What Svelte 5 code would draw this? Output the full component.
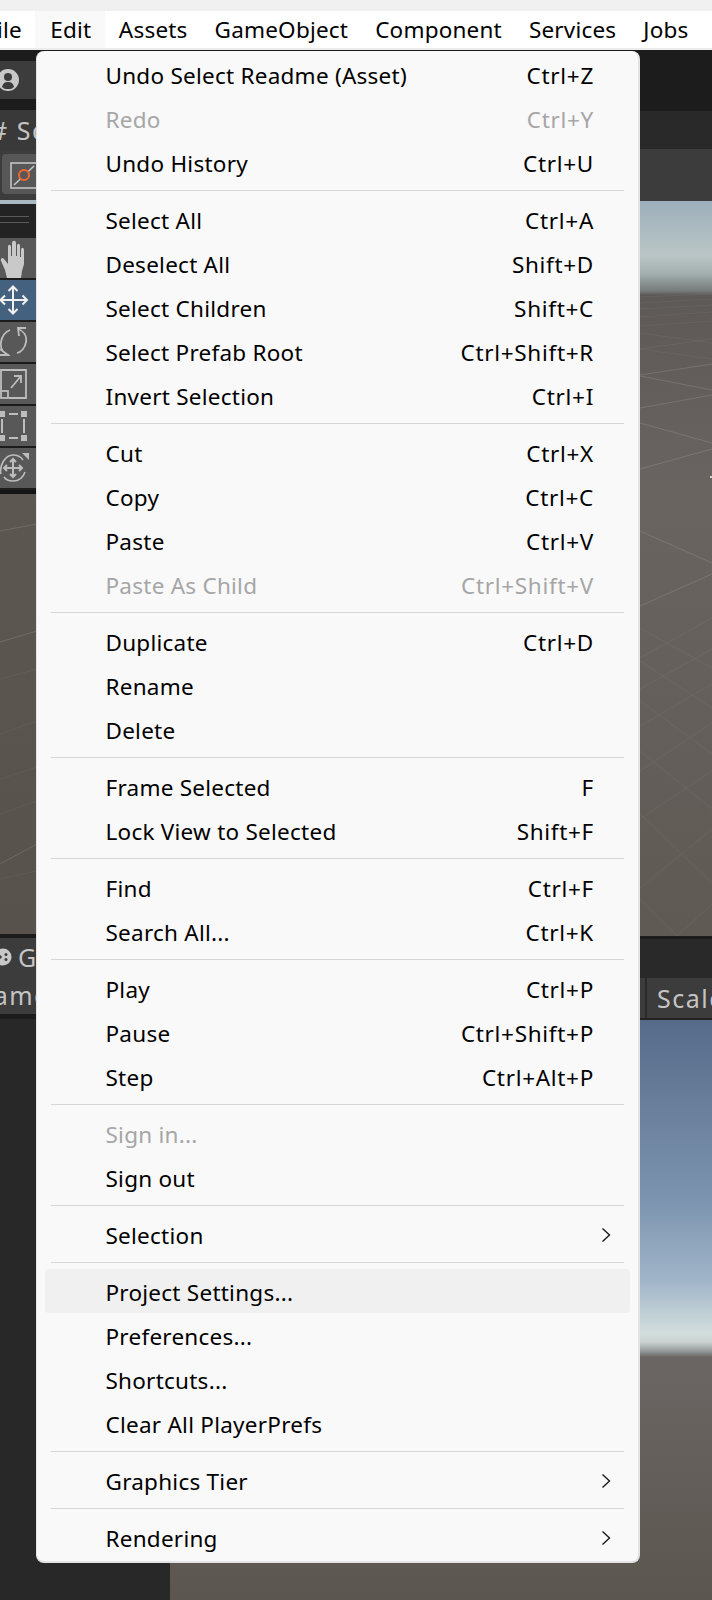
<script>
  const menubar = ['File', 'Edit', 'Assets', 'GameObject', 'Component', 'Services', 'Jobs']

  const groups = [
    [
      { label: 'Undo Select Readme (Asset)', key: 'Ctrl+Z' },
      { label: 'Redo', key: 'Ctrl+Y', disabled: true },
      { label: 'Undo History', key: 'Ctrl+U' }
    ],
    [
      { label: 'Select All', key: 'Ctrl+A' },
      { label: 'Deselect All', key: 'Shift+D' },
      { label: 'Select Children', key: 'Shift+C' },
      { label: 'Select Prefab Root', key: 'Ctrl+Shift+R' },
      { label: 'Invert Selection', key: 'Ctrl+I' }
    ],
    [
      { label: 'Cut', key: 'Ctrl+X' },
      { label: 'Copy', key: 'Ctrl+C' },
      { label: 'Paste', key: 'Ctrl+V' },
      { label: 'Paste As Child', key: 'Ctrl+Shift+V', disabled: true }
    ],
    [
      { label: 'Duplicate', key: 'Ctrl+D' },
      { label: 'Rename' },
      { label: 'Delete' }
    ],
    [
      { label: 'Frame Selected', key: 'F' },
      { label: 'Lock View to Selected', key: 'Shift+F' }
    ],
    [
      { label: 'Find', key: 'Ctrl+F' },
      { label: 'Search All...', key: 'Ctrl+K' }
    ],
    [
      { label: 'Play', key: 'Ctrl+P' },
      { label: 'Pause', key: 'Ctrl+Shift+P' },
      { label: 'Step', key: 'Ctrl+Alt+P' }
    ],
    [
      { label: 'Sign in...', disabled: true },
      { label: 'Sign out' }
    ],
    [{ label: 'Selection', sub: true }],
    [
      { label: 'Project Settings...', hover: true },
      { label: 'Preferences...' },
      { label: 'Shortcuts...' },
      { label: 'Clear All PlayerPrefs' }
    ],
    [{ label: 'Graphics Tier', sub: true }],
    [{ label: 'Rendering', sub: true }]
  ]

  // scene grid, in page coordinates; the last value marks a brighter line
  const leftGrid = [
    [0, 532, 37, 525, true],
    [0, 643, 37, 632, true],
    [0, 680, 37, 670],
    [0, 735, 37, 722],
    [0, 780, 37, 768],
    [0, 815, 37, 802],
    [0, 865, 37, 845, true],
    [0, 880, 37, 872]
  ]
  const rightGrid = [
    [640, 296, 712, 293],
    [640, 302, 712, 298],
    [640, 308, 712, 304],
    [640, 316, 712, 311],
    [640, 325, 712, 320],
    [640, 332, 712, 342],
    [640, 348, 712, 338],
    [640, 348, 712, 358],
    [640, 374, 712, 363, true],
    [640, 375, 712, 389, true],
    [640, 407, 712, 394, true],
    [640, 422, 712, 442, true],
    [640, 468, 712, 448, true],
    [640, 530, 712, 562, true],
    [640, 605, 712, 573, true],
    [640, 627, 712, 667],
    [640, 657, 712, 617],
    [640, 688, 712, 648],
    [640, 660, 712, 707],
    [640, 725, 712, 683],
    [640, 700, 712, 753],
    [640, 770, 712, 722],
    [640, 750, 712, 808],
    [640, 818, 712, 770],
    [640, 813, 712, 882],
    [640, 887, 712, 828],
    [640, 898, 677, 935],
    [677, 935, 712, 903]
  ]
</script>

<div class="top-strip"></div>

<nav class="menubar">
  {#each menubar as name}
    <span class="menubar-item" class:open={name === 'Edit'} class:file={name === 'File'}>{name}</span>
  {/each}
</nav>

<div class="stage">
  <div class="left">
    <div class="dark-gap"></div>
    <div class="account">
      <svg width="24" height="26" viewBox="0 0 24 26">
        <circle cx="8" cy="13" r="11" fill="#c8c8c8" />
        <circle cx="8" cy="10" r="4" fill="#3c3c3c" />
        <path d="M2 20c1-4 3-5 6-5s5 1 6 5l-3 2H5z" fill="#3c3c3c" />
      </svg>
    </div>
    <div class="dark-gap"></div>
    <div class="tab"><span class="tab-text scene-title"># Scene</span></div>
    <div class="tools-head">
      <div class="gizmo-btn">
        <svg width="34" height="30" viewBox="0 0 34 30">
          <rect x="9" y="4" width="40" height="25" fill="none" stroke="#c4c4c4" stroke-width="1.6" />
          <path d="M12 26L32 7" stroke="#c4c4c4" stroke-width="1.6" />
          <circle cx="22" cy="16" r="5" fill="#575757" stroke="#f0682f" stroke-width="2" />
        </svg>
      </div>
    </div>
    <div class="sky-line"></div>
    <div class="handle"><i></i><i></i></div>

    <div class="tool">
      <svg width="30" height="40" viewBox="0 0 30 40" fill="#c9c9c9">
        <path d="M7 40l-2-8-4-9c-1-3 2-4 3-2l4 5V9c0-3 3-3 3 0v9l1 0V5c0-3 4-3 4 0v13h1V8c0-3 3-3 3 0v11h1v-7c0-3 3-3 3 0v14l-2 7-1 7z" />
      </svg>
    </div>
    <div class="tool active">
      <svg width="30" height="40" viewBox="0 0 30 40" fill="none" stroke="#f0f0f0" stroke-width="2">
        <path d="M13 7v26M1 20h26M8.5 11L13 6.5l4.5 4.500M8.500 29l4.500 4.500 4.500-4.500M5 15.500L.5 20 5 24.500M22.500 15.500L27 20l-4.500 4.500" />
      </svg>
    </div>
    <div class="tool">
      <svg width="30" height="40" viewBox="0 0 30 40" fill="none" stroke="#bdbdbd" stroke-width="1.8">
        <path d="M18 7c6 2 9 7 8 13s-5 10-9 11M19 14l-1-8 8 0M9 33C3 31 0 26 1 20S5 10 10 8M0 27l8 6h-8" />
      </svg>
    </div>
    <div class="tool">
      <svg width="30" height="40" viewBox="0 0 30 40" fill="none" stroke="#bdbdbd" stroke-width="1.8">
        <path d="M1 27V6h25v28H9" />
        <rect x="1" y="27" width="7" height="7" />
        <path d="M11 24L21 12M14 12h7v7" />
      </svg>
    </div>
    <div class="tool">
      <svg width="30" height="40" viewBox="0 0 30 40" fill="#bdbdbd">
        <rect x="-2" y="5" width="7" height="6" />
        <rect x="21" y="5" width="6" height="6" />
        <rect x="-2" y="29" width="7" height="6" />
        <rect x="21" y="29" width="6" height="6" />
        <rect x="9" y="7" width="9" height="2" />
        <rect x="9" y="31" width="9" height="2" />
        <rect x="1" y="13" width="2" height="14" />
        <rect x="23" y="13" width="2" height="14" />
      </svg>
    </div>
    <div class="tool">
      <svg width="30" height="40" viewBox="0 0 30 40" fill="none" stroke="#bdbdbd" stroke-width="1.6">
        <path d="M1 26C-1 18 5 7 13 7c5 0 8 2 10 5M25 24c-2 6-6 9-12 9-4 0-7-1-9-4" />
        <path d="M13 11v18M4 20h18M10 14l3-3 3 3M10 26l3 3 3-3M7 17l-3 3 3 3M19 17l3 3-3 3" stroke-width="2" />
        <path d="M22 5h7v7z" fill="#bdbdbd" stroke="none" />
      </svg>
    </div>

    <div class="tool-end"></div>

    <svg class="scene-left" viewBox="0 495 170 440" preserveAspectRatio="none">
      {#each leftGrid as [x1, y1, x2, y2, major]}
        <line class:major {x1} {y1} {x2} {y2} />
      {/each}
    </svg>

    <div class="game-head">
      <div class="game-tab">
        <svg width="12" height="20" viewBox="0 0 12 20">
          <circle cx="3" cy="10" r="8.5" fill="#c8c8c8" />
          <circle cx="0" cy="10" r="1.8" fill="#3c3c3c" />
          <circle cx="6" cy="7.5" r="1.5" fill="#3c3c3c" />
          <circle cx="6" cy="12.5" r="1.5" fill="#3c3c3c" />
        </svg>
        <span class="tab-text">Game</span>
      </div>
      <div class="game-row"><span class="tab-text game-name">Game</span></div>
    </div>
    <div class="left-rest"></div>
  </div>

  <div class="right">
    <div class="right-dark"></div>
    <div class="right-tabs"></div>
    <div class="right-tools"></div>
    <svg class="scene-right" viewBox="170 200 542 735" preserveAspectRatio="none">
      {#each rightGrid as [x1, y1, x2, y2, major]}
        <line class:major {x1} {y1} {x2} {y2} />
      {/each}
      <rect x="710" y="475" width="2" height="2" fill="#d8d0c8" />
    </svg>
    <div class="game-line"></div>
    <div class="game-tabs"></div>
    <div class="game-tools">
      <span class="scale-btn tab-text">Scale</span>
    </div>
    <div class="game-view"></div>
  </div>

  <div class="menu">
    {#each groups as group, i}
      {#if i > 0}
        <div class="sep"></div>
      {/if}
      {#each group as item}
        <div class="row" class:disabled={item.disabled} class:hover={item.hover}>
          <span>{item.label}</span>
          {#if item.key}
            <span class="shortcut">{item.key}</span>
          {/if}
          {#if item.sub}
            <svg class="chevron" width="10" height="16" viewBox="0 0 10 16" fill="none" stroke="#1a1a1a" stroke-width="1.4">
              <path d="M1.5 1.5L8.5 8l-7 6.5" />
            </svg>
          {/if}
        </div>
      {/each}
    {/each}
  </div>
</div>

<style>
  :global(body) {
    margin: 0;
    background: #282828;
    font-family: 'Noto Sans', 'Open Sans', sans-serif;
  }

  .top-strip {
    height: 11px;
    background: #f0f0f0;
  }

  .menubar {
    display: flex;
    height: 37px;
    background: #fff;
    border-bottom: 2px solid #ececec;
    font-size: 22.5px;
    letter-spacing: 0.2px;
    color: #000;
    overflow: hidden;
  }

  .menubar-item {
    display: flex;
    align-items: center;
    padding: 0 13.5px;
    white-space: nowrap;
  }

  .menubar-item.file {
    margin-left: -28.5px;
  }

  .menubar-item.open {
    padding: 0 14px 0 15px;
    background: #f9f9f9;
  }

  .stage {
    position: relative;
    display: flex;
    height: 1550px;
    overflow: hidden;
  }

  .left {
    width: 170px;
    display: flex;
    flex-direction: column;
    overflow: hidden;
    background: #282828;
  }

  .dark-gap {
    height: 11px;
    background: #1c1c1c;
  }

  .account {
    height: 38px;
    display: flex;
    align-items: center;
    background: #3c3c3c;
  }

  .tab {
    height: 40px;
    display: flex;
    align-items: center;
    background: #393939;
  }

  .tab-text {
    font-size: 25px;
    letter-spacing: 1.5px;
    color: #c4c4c4;
    white-space: nowrap;
  }

  .scene-title {
    margin-left: -9px;
  }

  .tools-head {
    height: 50px;
    padding-top: 4px;
    padding-left: 2px;
    box-sizing: border-box;
    background: #3c3c3c;
  }

  .gizmo-btn {
    width: 60px;
    height: 40px;
    display: flex;
    align-items: center;
    background: #575757;
    border-radius: 4px;
    overflow: hidden;
  }

  .sky-line {
    height: 4px;
    background: #a9b9c2;
  }

  .handle {
    height: 34px;
    background: #232323;
    padding-top: 12px;
    box-sizing: border-box;
  }

  .handle i {
    display: block;
    width: 29px;
    height: 1px;
    margin-bottom: 5px;
    background: #5a5a5a;
  }

  .tool {
    height: 40px;
    margin-bottom: 2px;
    background: #585858;
    box-shadow: 0 2px 0 #1c1c1c;
    display: flex;
    overflow: hidden;
  }

  .tool.active {
    background: #44617f;
  }

  .tool-end {
    height: 4px;
    background: #141414;
  }

  .scene-left {
    display: block;
    width: 170px;
    height: 440px;
    flex-shrink: 0;
    background: linear-gradient(#5c5751, #57524c);
  }

  .scene-left line,
  .scene-right line {
    stroke: #ffffff;
    stroke-opacity: 0.05;
    stroke-width: 1;
    vector-effect: non-scaling-stroke;
  }

  .scene-left line.major,
  .scene-right line.major {
    stroke-opacity: 0.13;
  }

  .game-head {
    border-top: 4px solid #1c1c1c;
    border-bottom: 5px solid #1c1c1c;
    background: #3c3c3c;
  }

  .game-tab {
    height: 38px;
    display: flex;
    align-items: center;
    gap: 6px;
  }

  .game-row {
    height: 38px;
    display: flex;
    align-items: center;
  }

  .game-name {
    margin-left: -26px;
  }

  .left-rest {
    flex: 1;
  }

  .right {
    flex: 1;
    display: flex;
    flex-direction: column;
    min-width: 0;
  }

  .right-dark {
    height: 61px;
    background: #1c1c1c;
  }

  .right-tabs {
    height: 38px;
    background: #292929;
  }

  .right-tools {
    height: 52px;
    background: #3c3c3c;
  }

  .scene-right {
    display: block;
    width: 100%;
    height: 735px;
    flex-shrink: 0;
    background: linear-gradient(
      #9cafba 0,
      #bac6c6 55px,
      #a4b0b0 72px,
      #777b7c 90px,
      #5d5957 94px,
      #6a6461 290px,
      #5f5a54 100%
    );
  }

  .game-line {
    height: 3px;
    background: #1c1c1c;
  }

  .game-tabs {
    height: 39px;
    background: #292929;
  }

  .game-tools {
    height: 40px;
    display: flex;
    justify-content: flex-end;
    background: #3c3c3c;
    border-bottom: 2px solid #222;
  }

  .scale-btn {
    width: 67px;
    padding-left: 10px;
    box-sizing: border-box;
    line-height: 40px;
    border-left: 2px solid #2a2a2a;
    overflow: hidden;
  }

  .game-view {
    flex: 1;
    background: linear-gradient(
      #566b89 0,
      #7d94b0 181px,
      #a0b5c8 261px,
      #d3dedd 313px,
      #c9d2d1 322px,
      #8f9393 332px,
      #6b6663 337px,
      #5c5650 100%
    );
  }

  .menu {
    position: absolute;
    left: 36px;
    top: 1px;
    width: 604px;
    height: 1512px;
    box-sizing: border-box;
    padding: 1.3px 0;
    background: #f9f9f9;
    border: 1px solid #e4e4e4;
    border-width: 0 2px 2px 1px;
    border-radius: 8px;
    font-size: 22.5px;
    letter-spacing: 0.25px;
    color: #000;
  }

  .row {
    height: 44px;
    margin: 0 8px;
    padding: 2px 36px 0 60.5px;
    box-sizing: border-box;
    display: flex;
    align-items: center;
    justify-content: space-between;
    border-radius: 4px;
    white-space: nowrap;
  }

  .row.disabled {
    color: #a6a6a6;
  }

  .row.hover {
    background: #f0f0f0;
  }

  .shortcut {
    letter-spacing: 0.7px;
  }

  .chevron {
    margin-right: -17px;
  }

  .sep {
    height: 1px;
    margin: 6px 14px;
    background: #d6d6d6;
  }
</style>
